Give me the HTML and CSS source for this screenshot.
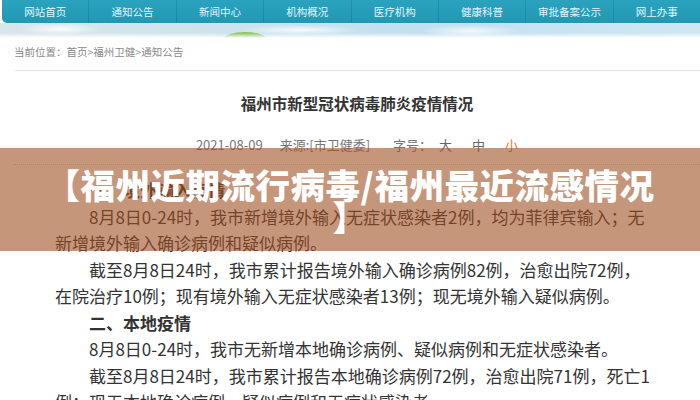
FILE: index.html
```html
<!DOCTYPE html>
<html lang="zh-CN">
<head>
<meta charset="utf-8">
<title>福州市新型冠状病毒肺炎疫情情况</title>
<link rel="stylesheet" href="styles.css">
</head>
<body>
<div class="page">
  <nav class="nav">
    <a class="nav-item">网站首页</a>
    <a class="nav-item">通知公告</a>
    <a class="nav-item">新闻中心</a>
    <a class="nav-item">机构概况</a>
    <a class="nav-item">医疗机构</a>
    <a class="nav-item">健康科普</a>
    <a class="nav-item">审批备案公示</a>
    <a class="nav-item">网上办事</a>
  </nav>
  <div class="banner"><span class="hill"></span></div>
  <main class="main">
    <div class="crumb">当前位置：首页&gt;福州卫健&gt;通知公告</div>
    <h1 class="title">福州市新型冠状病毒肺炎疫情情况</h1>
    <div class="meta">
      <span class="date">2021-08-09</span>
      <span class="source">来源:[市卫健委]</span>
      <span class="size-label">字号：</span>
      <span class="size">大</span>
      <span class="size">中</span>
      <span class="size active">小</span>
    </div>
    <article class="content">
      <p class="head">一、境外输入疫情</p>
      <p>8月8日0-24时，我市新增境外输入无症状感染者2例，均为菲律宾输入；无<br>新增境外输入确诊病例和疑似病例。</p>
      <p>截至8月8日24时，我市累计报告境外输入确诊病例82例，治愈出院72例，<br>在院治疗10例；现有境外输入无症状感染者13例；现无境外输入疑似病例。</p>
      <p class="head">二、本地疫情</p>
      <p>8月8日0-24时，我市无新增本地确诊病例、疑似病例和无症状感染者。</p>
      <p>截至8月8日24时，我市累计报告本地确诊病例72例，治愈出院71例，死亡1<br>例；现无本地确诊病例、疑似病例和无症状感染者。</p>
    </article>
  </main>
  <div class="overlay">
    <div class="overlay-text">【福州近期流行病毒/福州最近流感情况】</div>
  </div>
</div>
</body>
</html>
```

FILE: styles.css
```css
* { box-sizing: border-box; }
html, body { margin: 0; padding: 0; }
body {
  width: 700px;
  height: 400px;
  overflow: hidden;
  background: #fff;
  font-family: "Noto Sans CJK SC", "Noto Sans", sans-serif;
  color: #333;
}
.page {
  position: relative;
  width: 700px;
  height: 400px;
  overflow: hidden;
}
.nav {
  display: flex;
  height: 23px;
  margin-left: 2px;
  background: linear-gradient(#2ba3bf, #1f98b4);
  border-bottom-left-radius: 5px;
}
.nav-item {
  flex: 1;
  text-align: center;
  line-height: 23px;
  font-size: 10.5px;
  color: #e4f3f8;
  border-right: 1px solid rgba(0, 70, 90, 0.18);
}
.nav-item:last-child { border-right: 0; }
.banner {
  position: relative;
  height: 15px;
  overflow: hidden;
  background:
    radial-gradient(ellipse 40px 6px at 60px 6px, rgba(255,255,255,0.9), rgba(255,255,255,0)),
    radial-gradient(ellipse 60px 5px at 300px 7px, rgba(255,255,255,0.85), rgba(255,255,255,0)),
    radial-gradient(ellipse 50px 6px at 470px 8px, rgba(255,255,255,0.8), rgba(255,255,255,0)),
    linear-gradient(90deg, #d9e6ec 0%, #cfe3ee 30%, #c2e0ef 60%, #cfe7f3 100%);
}
.banner::after {
  content: "";
  position: absolute;
  left: 0; right: 0; bottom: 0;
  height: 5px;
  background: linear-gradient(rgba(255,255,255,0), #fff);
}
.hill {
  position: absolute;
  left: 224px;
  top: 9px;
  width: 42px;
  height: 14px;
  border-radius: 50% 50% 0 0;
  background: #8cc45c;
}
.main {
  margin-left: 14px;
}
.crumb {
  padding: 7px 0 11px;
  line-height: 14px;
  font-size: 10.5px;
  color: #8a8a8a;
  border-bottom: 1px solid #e6e6e6;
}
.title {
  margin: 22px 0 0;
  text-align: center;
  font-size: 15.5px;
  line-height: 20px;
  font-weight: 700;
  color: #333;
}
.meta {
  display: flex;
  justify-content: center;
  margin-top: 23px;
  padding-bottom: 10px;
  line-height: 18px;
  font-size: 13px;
  color: #777;
  border-bottom: 1px dotted #d0d0d0;
}
.source { margin-left: 17px; }
.size-label { margin-left: 23px; }
.size { margin-left: 7px; color: #666; }
.size + .size { margin-left: 20px; }
.size.active { color: #ea7a3c; }
.content {
  padding: 12px 20px 0 41px;
  font-size: 17px;
  line-height: 26.5px;
  color: #333;
}
.content p {
  margin: 0;
  text-indent: 2em;
  white-space: nowrap;
}
.content .head { font-weight: 700; }
.overlay {
  position: absolute;
  left: 0;
  top: 148px;
  width: 700px;
  height: 103px;
  display: flex;
  align-items: center;
  justify-content: center;
  padding: 0 44px;
  background: rgba(160, 80, 35, 0.6);
}
.overlay-text {
  text-align: center;
  font-size: 34.5px;
  line-height: 32px;
  font-weight: 900;
  letter-spacing: 0.5px;
  line-break: anywhere;
  color: #fff;
}
```
